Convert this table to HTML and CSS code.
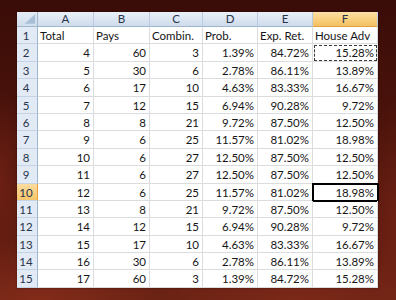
FILE: index.html
```html
<!DOCTYPE html>
<html>
<head>
<meta charset="utf-8">
<link rel="stylesheet" href="styles.css">
</head>
<body>
<div class="stage">
  <div class="sheet">
    <div class="corner"><svg width="21" height="15" viewBox="0 0 21 15"><polygon points="19,3 19,13 8,13" fill="#a9bfd6"/></svg></div>
    <div class="ch">A</div><div class="ch">B</div><div class="ch">C</div><div class="ch">D</div><div class="ch">E</div><div class="ch ch-sel">F</div>

    <div class="rh">1</div><div class="c l">Total</div><div class="c l">Pays</div><div class="c l">Combin.</div><div class="c l">Prob.</div><div class="c l">Exp. Ret.</div><div class="c l">House Adv</div>
    <div class="rh">2</div><div class="c">4</div><div class="c">60</div><div class="c">3</div><div class="c">1.39%</div><div class="c">84.72%</div><div class="c copy">15.28%</div>
    <div class="rh">3</div><div class="c">5</div><div class="c">30</div><div class="c">6</div><div class="c">2.78%</div><div class="c">86.11%</div><div class="c">13.89%</div>
    <div class="rh">4</div><div class="c">6</div><div class="c">17</div><div class="c">10</div><div class="c">4.63%</div><div class="c">83.33%</div><div class="c">16.67%</div>
    <div class="rh">5</div><div class="c">7</div><div class="c">12</div><div class="c">15</div><div class="c">6.94%</div><div class="c">90.28%</div><div class="c">9.72%</div>
    <div class="rh">6</div><div class="c">8</div><div class="c">8</div><div class="c">21</div><div class="c">9.72%</div><div class="c">87.50%</div><div class="c">12.50%</div>
    <div class="rh">7</div><div class="c">9</div><div class="c">6</div><div class="c">25</div><div class="c">11.57%</div><div class="c">81.02%</div><div class="c">18.98%</div>
    <div class="rh">8</div><div class="c">10</div><div class="c">6</div><div class="c">27</div><div class="c">12.50%</div><div class="c">87.50%</div><div class="c">12.50%</div>
    <div class="rh">9</div><div class="c">11</div><div class="c">6</div><div class="c">27</div><div class="c">12.50%</div><div class="c">87.50%</div><div class="c">12.50%</div>
    <div class="rh rh-sel">10</div><div class="c">12</div><div class="c">6</div><div class="c">25</div><div class="c">11.57%</div><div class="c">81.02%</div><div class="c active">18.98%</div>
    <div class="rh">11</div><div class="c">13</div><div class="c">8</div><div class="c">21</div><div class="c">9.72%</div><div class="c">87.50%</div><div class="c">12.50%</div>
    <div class="rh">12</div><div class="c">14</div><div class="c">12</div><div class="c">15</div><div class="c">6.94%</div><div class="c">90.28%</div><div class="c">9.72%</div>
    <div class="rh">13</div><div class="c">15</div><div class="c">17</div><div class="c">10</div><div class="c">4.63%</div><div class="c">83.33%</div><div class="c">16.67%</div>
    <div class="rh">14</div><div class="c">16</div><div class="c">30</div><div class="c">6</div><div class="c">2.78%</div><div class="c">86.11%</div><div class="c">13.89%</div>
    <div class="rh">15</div><div class="c">17</div><div class="c">60</div><div class="c">3</div><div class="c">1.39%</div><div class="c">84.72%</div><div class="c">15.28%</div>
  </div>
</div>
</body>
</html>
```
FILE: styles.css
```css
html, body {
  margin: 0;
  padding: 0;
}
body {
  width: 396px;
  height: 300px;
  overflow: hidden;
  background:
    radial-gradient(ellipse 120px 60px at 40px 300px, rgba(150, 50, 30, 0.55), transparent),
    radial-gradient(ellipse 140px 50px at 300px 300px, rgba(140, 45, 28, 0.5), transparent),
    radial-gradient(ellipse 30px 90px at 0px 180px, rgba(130, 40, 25, 0.5), transparent),
    radial-gradient(ellipse 30px 120px at 396px 220px, rgba(130, 40, 25, 0.45), transparent),
    linear-gradient(180deg, #3a0c07 0%, #4a130b 40%, #5d1a0f 75%, #6b2314 100%);
  font-family: Lato, "Liberation Sans", sans-serif;
}
.stage {
  padding: 12px 0 0 17px;
}
.sheet {
  display: grid;
  grid-template-columns: 21px 56px 56px 53px 55px 55px 65px;
  grid-template-rows: 15px repeat(15, 17.4px);
  width: 361px;
  background: #ffffff;
  box-shadow: 0 0 2px rgba(0, 0, 0, 0.4);
}
.corner {
  background: linear-gradient(180deg, #e4ecf6, #d2deec);
  border-right: 1px solid #9eb6ce;
  border-bottom: 1px solid #9eb6ce;
  box-sizing: border-box;
  display: flex;
  align-items: flex-end;
  justify-content: flex-end;
}
.corner svg {
  display: block;
}
.ch {
  background: linear-gradient(180deg, #eaf0f8 0%, #dbe5f1 55%, #cfdbea 100%);
  border-right: 1px solid #b8cbe0;
  border-bottom: 1px solid #9eb6ce;
  box-sizing: border-box;
  color: #26354a;
  font-size: 11.5px;
  line-height: 14px;
  text-align: center;
}
.ch-sel {
  background: linear-gradient(180deg, #fbe0a8 0%, #f8cf7c 55%, #f3c065 100%);
  border-bottom-color: #e2a43e;
}
.rh {
  background: #e2eaf5;
  border-right: 1px solid #9eb6ce;
  border-bottom: 1px solid #c5d3e3;
  box-sizing: border-box;
  color: #26354a;
  font-size: 11.5px;
  line-height: 17px;
  text-align: center;
  padding-right: 2px;
}
.rh-sel {
  background: linear-gradient(180deg, #fbdca0 0%, #f6c56a 100%);
  border-right-color: #e2a43e;
}
.c {
  border-right: 1px solid #dadcdd;
  border-bottom: 1px solid #dadcdd;
  box-sizing: border-box;
  color: #161616;
  font-size: 11.5px;
  line-height: 17px;
  text-align: right;
  padding: 0 3px 0 2px;
  white-space: nowrap;
}
.c.l {
  text-align: left;
  padding-left: 2px;
}
.copy {
  outline: 1px dashed #3a3a3a;
  outline-offset: -2px;
}
.active {
  outline: 2px solid #000000;
  outline-offset: -1px;
}
```
